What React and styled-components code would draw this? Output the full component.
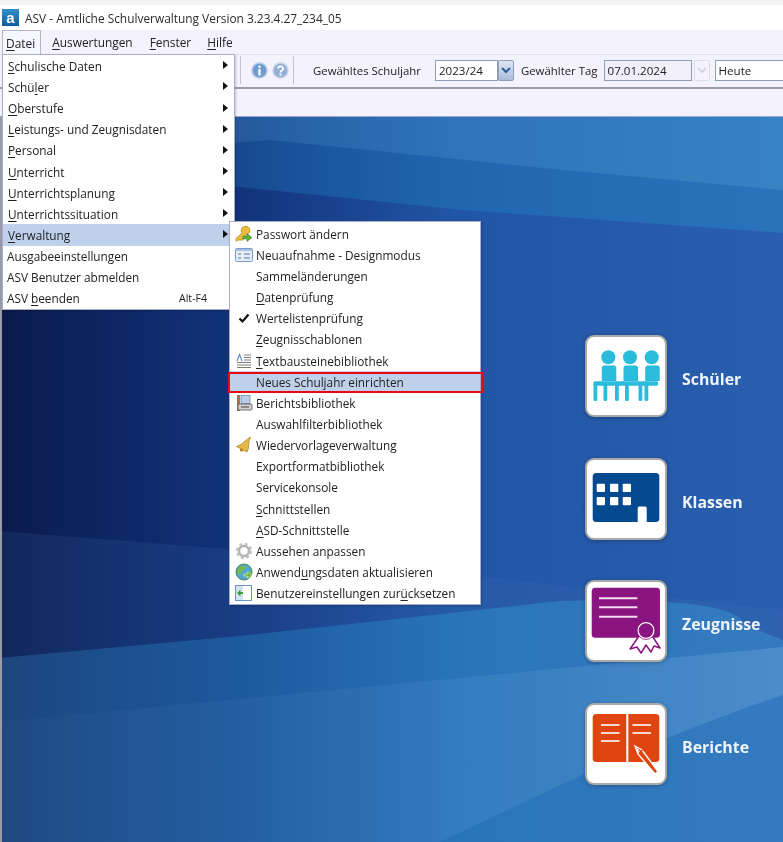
import React from 'react';
import styled, { createGlobalStyle } from 'styled-components';

const Global = createGlobalStyle`
  html, body { margin: 0; padding: 0; background: #fff; }
  body { font-family: "Open Sans", "Noto Sans", "Liberation Sans", sans-serif; }
`;

const Page = styled.div`
  position: relative; width: 783px; height: 842px; overflow: hidden;
  display: flex; flex-direction: column; color: #222; font-size: 11.8px;
  filter: blur(0.35px);
`;
const TopStrip = styled.div`height: 5px; background: #f4f4f4;`;
const TitleBar = styled.div`
  height: 25px; background: #fff; display: flex; align-items: center; padding-left: 2px; gap: 6px;
  font-size: 11.9px; color: #2c2c2c;
`;
const AppIcon = styled.span`
  width: 17px; height: 17px; background: linear-gradient(#2f8fc8, #0c5f9e); color: #fff;
  display: flex; align-items: center; justify-content: center;
  font: bold 15px/15px "Liberation Sans", sans-serif;
`;
const MenuBar = styled.div`
  height: 24px; background: #f4f3fd; display: flex; align-items: center; padding-left: 2px; font-size: 11.9px;
`;
const TopItem = styled.div`
  height: 24px; box-sizing: border-box; display: flex; align-items: center;
  padding: 0 ${p => p.$pr}px 0 ${p => p.$pl}px;
  ${p => p.$open && 'border: 1px solid #b4b4c0; border-bottom: none; background: #f7f7ff;'}
`;
const Toolbar = styled.div`
  height: 35px; box-sizing: border-box; background: #f4f3fd; border-top: 1px solid #e2e1ec; border-bottom: 2px solid #9c9ca4;
  display: flex; align-items: center; padding: 0 0 2px 240px; white-space: nowrap; font-size: 11.4px;
`;
const Sep = styled.div`width: 1px; height: 28px; background: #c4c4ce; flex: none; margin: ${p => p.$m};`;
const RoundIcon = styled.svg`width: 17px; height: 17px; margin-right: ${p => p.$mr}px; flex: none;`;
const ToolLabel = styled.span`margin: ${p => p.$m};`;
const Field = styled.div`
  box-sizing: border-box; width: ${p => p.$w}px; height: 21px; border: 1px solid #8b9dbb;
  background: ${p => p.$off ? '#f0effa' : '#fff'}; display: flex; align-items: center; padding-left: 3px;
  flex: none; font-size: 11.6px; margin-left: ${p => p.$ml || 0}px;
`;
const DropBtn = styled.div`
  box-sizing: border-box; width: ${p => p.$w}px; height: 21px; border: 1px solid ${p => p.$off ? '#dcdce4' : '#8b9dbb'}; border-radius: 2px;
  background: ${p => p.$off ? '#f4f3fd' : 'linear-gradient(#dfe6f4, #a9bbdc)'};
  display: flex; align-items: center; justify-content: center; flex: none; margin-left: ${p => p.$ml || 0}px;
`;
const SubStrip = styled.div`height: 28px; background: #f4f3fd; border-bottom: 1px solid #9aa6cc; box-sizing: border-box;`;
const Desktop = styled.div`
  position: relative; flex: 1; overflow: hidden;
  background: linear-gradient(90deg, #0a1a4c 0%, #0c2560 12%, #12337a 30%, #2155a5 58%, #2a5eae 100%);
  border-left: 2px solid #9a9aa8; box-sizing: border-box;
  display: flex; justify-content: flex-end;
`;
const Waves = styled.svg`position: absolute; left: -2px; top: -117px; width: 783px; height: 842px;`;
const Tiles = styled.div`
  position: relative; width: 198px; padding-top: 218px; display: flex; flex-direction: column; gap: 40.6px;
`;
const Tile = styled.div`display: flex; align-items: center; gap: 15px;`;
const Card = styled.div`
  width: 82px; height: 82px; box-sizing: border-box; background: #fff; border: 2px solid #a9a9a9; border-radius: 9px;
  box-shadow: 0 1px 4px rgba(0,0,0,.25); flex: none; position: relative;
`;
const CardArt = styled.svg`position: absolute; left: -2px; top: -2px; width: 82px; height: 82px;`;
const TileLabel = styled.span`color: #eef4fb; font: bold 15.9px "Open Sans", sans-serif; margin-top: 6px;`;

const Menu = styled.div`
  position: absolute; left: ${p => p.$l}px; top: ${p => p.$t}px; width: ${p => p.$w}px; box-sizing: border-box;
  background: #fff; border: 1px solid #a8aec6; box-shadow: 1px 1px 2px rgba(0,0,0,.18); padding-top: ${p => p.$pt}px;
  z-index: ${p => p.$z};
`;
const Row = styled.div`
  position: relative; height: 21.17px; display: flex; align-items: center; white-space: pre;
  padding-left: ${p => p.$pl}px; background: ${p => p.$hi ? '#bfd0ea' : 'transparent'};
`;
const Slot = styled.span`width: 18px; height: 18px; margin-right: 3px; flex: none; display: flex; align-items: center; justify-content: center;`;
const Mn = styled.span`text-decoration: underline; text-underline-offset: 2px;`;
const Arrow = styled.span`
  position: absolute; right: 6px; top: 6px; width: 0; height: 0;
  border-left: 5px solid #111; border-top: 4.5px solid transparent; border-bottom: 4.5px solid transparent;
`;
const Shortcut = styled.span`position: absolute; left: 176px; font-size: 10.6px;`;
const RedBox = styled.div`
  position: absolute; left: -2px; right: -3px; top: 1px; bottom: -1px; border: 2px solid #e80a10; pointer-events: none;
`;

const label = s => {
  const i = s.indexOf('&');
  if (i < 0) return <span>{s}</span>;
  return <span>{s.slice(0, i)}<Mn>{s[i + 1]}</Mn>{s.slice(i + 2)}</span>;
};

const KeyIcon = () => (
  <svg width="18" height="18" viewBox="0 0 18 18">
    <path d="M10 1.500a4 4 0 0 1 5 3.500 4 4 0 0 1-3 4l-2 1v2l-2 1v2H3.500L1 16v-2.500l6-5.500a4 4 0 0 1 3-6.500z" fill="#eebb3c" stroke="#b98a1e" strokeWidth=".8" />
    <path d="M8 11h4V8.500l5 4-5 4V14H8z" fill="#62ad3c" stroke="#3e8a28" strokeWidth=".6" />
  </svg>
);
const FormIcon = () => (
  <svg width="18" height="16" viewBox="0 0 18 16">
    <rect x=".5" y="1.500" width="17" height="13" rx="1" fill="#e6eef8" stroke="#7d9ccc" />
    <rect x="1" y="2" width="16" height="2" fill="#a9c0e2" />
    <path d="M3 7h3M3 11h3M9 7h6M9 11h6" stroke="#7f9fca" strokeWidth="1.400" />
  </svg>
);
const CheckIcon = () => (
  <svg width="12" height="12" viewBox="0 0 12 12"><path d="M1.500 6.500 4.500 9.500 10.500 2.500" fill="none" stroke="#111" strokeWidth="2.200" /></svg>
);
const TextLibIcon = () => (
  <svg width="16" height="16" viewBox="0 0 16 16">
    <path d="M1 8 3.500 1.500 6 8" fill="none" stroke="#6a93c8" strokeWidth="1.300" />
    <path d="M8 2h7M8 4.500h7M8 7h7M1 9.500h14M1 12h14M1 14.500h14" stroke="#7a7a7a" strokeWidth="1.200" />
  </svg>
);
const ReportIcon = () => (
  <svg width="18" height="18" viewBox="0 0 18 18">
    <rect x="2" y="1" width="3" height="16" fill="#a9714a" />
    <rect x="6" y="1.500" width="9" height="8" fill="#b9cfe8" stroke="#6f89aa" strokeWidth=".8" />
    <rect x="3" y="10" width="14" height="6" rx="1" fill="#cfcfcf" stroke="#555" strokeWidth=".8" />
    <path d="M6 13h8" stroke="#444" />
  </svg>
);
const BellIcon = () => (
  <svg width="18" height="18" viewBox="0 0 18 18">
    <path d="M15.500 1 14 5.500 13.500 12l-1.500 4L1.500 10.500 6 8.500 10 5z" fill="#e6b84a" stroke="#b58a26" strokeWidth=".8" />
    <circle cx="6.500" cy="14" r="1.600" fill="#b77a22" />
  </svg>
);
const GearIcon = () => (
  <svg width="18" height="18" viewBox="0 0 18 18">
    <circle cx="9" cy="9" r="6.500" fill="none" stroke="#c4c4c4" strokeWidth="3.500" strokeDasharray="2.600 2.500" />
    <circle cx="9" cy="9" r="5" fill="none" stroke="#b6b6b6" strokeWidth="2.600" />
  </svg>
);
const GlobeIcon = () => (
  <svg width="18" height="18" viewBox="0 0 18 18">
    <circle cx="9" cy="9" r="8" fill="#56a7cf" stroke="#3f8a5a" />
    <path d="M2 7c3-4 6-5 8-4s0 3-2 4-1 3-3 4-3-1-3-4zM11 10l5-2 .500 3-3 5-3-2z" fill="#74b94a" />
    <path d="M9 11h3.500V9l4 3-4 3v-2H9z" fill="#68b23e" stroke="#fff" strokeWidth=".5" />
  </svg>
);
const ResetIcon = () => (
  <svg width="18" height="16" viewBox="0 0 18 16">
    <rect x=".5" y=".5" width="16" height="15" fill="#fff" stroke="#6f93c4" />
    <rect x="1" y="1" width="7" height="14" fill="#d5e3f3" />
    <path d="M2 8l3.500-3.500V7H8v2H5.500v2.500z" fill="#3f9e3c" />
  </svg>
);
const Chevron = ({ c }) => (
  <svg width="10" height="7" viewBox="0 0 10 7"><path d="M1 1l4 4 4-4" fill="none" stroke={c} strokeWidth="2" /></svg>
);

const mainItems = ['&Schulische Daten', 'Schü&ler', '&Oberstufe', '&Leistungs- und Zeugnisdaten', '&Personal', '&Unterricht', '&Unterrichtsplanung', '&Unterrichtssituation', '&Verwaltung'];
const plainItems = ['Ausgabeeinstellungen', 'ASV Benutzer abmelden'];

const subItems = [
  ['Passwort ändern', <KeyIcon />],
  ['Neuaufnahme - Designmodus', <FormIcon />],
  ['Sammeländerungen'],
  ['&Datenprüfung'],
  ['Wertelistenprüfung', <CheckIcon />],
  ['&Zeugnisschablonen'],
  ['&Textbausteinebibliothek', <TextLibIcon />],
  ['Neues Schuljahr einrichten'],
  ['Berichtsbibliothek', <ReportIcon />],
  ['Auswahlfilterbibliothek'],
  ['Wiedervorlageverwaltung', <BellIcon />],
  ['Exportformatbibliothek'],
  ['Servicekonsole'],
  ['&Schnittstellen'],
  ['&ASD-Schnittstelle'],
  ['Aussehen anpassen', <GearIcon />],
  ['Anwend&ungsdaten aktualisieren', <GlobeIcon />],
  ['Benutzereinstellungen zur&ücksetzen', <ResetIcon />],
];

const SchuelerArt = () => (
  <CardArt viewBox="0 0 82 82">
    <g fill="#29bcdc">
      {[0, 21.7, 43.400].map(d => (
        <g key={d}>
          <circle cx={23.300 + d} cy="22.300" r="7" />
          <path d={`M${16.800 + d} 46V33a2.500 2.500 0 0 1 2.500-2.500h9.500a2.500 2.500 0 0 1 2.500 2.500v13z`} />
        </g>
      ))}
      <rect x="8.300" y="46.300" width="65" height="4.400" rx="2" />
      {[8.500, 18.500, 30, 40, 53.500, 59.500].map(x => (
        <rect key={x} x={x} y="48" width="3.800" height="18" rx="1.600" />
      ))}
    </g>
  </CardArt>
);
const KlassenArt = () => (
  <CardArt viewBox="0 0 82 82">
    <rect x="7.700" y="15" width="66.600" height="49" rx="3.500" fill="#054a91" />
    <g fill="#fff">
      {[11.700, 25, 37.700].map(x => [25.700, 39].map(y => <rect key={`${x}${y}`} x={x} y={y} width="8.300" height="8.300" rx="1" />))}
      <path d="M52.700 64V50a1.500 1.500 0 0 1 1.500-1.500h6a1.500 1.500 0 0 1 1.500 1.500v14z" />
    </g>
  </CardArt>
);
const ZeugnisArt = () => (
  <CardArt viewBox="0 0 82 82">
    <rect x="6.700" y="7.700" width="68.300" height="50" rx="3.500" fill="#8b1580" />
    <path d="M14 18.300h38.300M14 27.300h38.300M14 36.700h38.300" stroke="#f3dcef" strokeWidth="2" />
    <path d="M54 56 45 69l7-2 4 6 5-8 5 7 3-6 6 2-9-14z" fill="#fff" stroke="#8b1580" strokeWidth="1.500" strokeLinejoin="round" />
    <circle cx="61" cy="50.500" r="8" fill="#8b1580" stroke="#fff" strokeWidth="1.500" />
    <circle cx="61" cy="50.500" r="9" fill="none" stroke="#8b1580" strokeWidth=".8" />
  </CardArt>
);
const BerichteArt = () => (
  <CardArt viewBox="0 0 82 82">
    <rect x="7.700" y="11" width="66.600" height="48" rx="3.500" fill="#e04510" />
    <rect x="41.300" y="9" width="2" height="52" fill="#fff" />
    <path d="M16 22h18.500M16 30h18.500M16 38h18.500M47.500 22H66M47.500 30H66" stroke="#f8d9cc" strokeWidth="2" />
    <path d="M50 43l7 4 16 21.500-3 2.500L53 51z" fill="#e04510" stroke="#fff" strokeWidth="1.400" />
    <path d="M51 45l4 2.500 1 0-3.500 3z" fill="#fff" />
    <path d="M53.500 48l5-1" stroke="#e04510" strokeWidth="1" />
  </CardArt>
);

const tiles = [
  ['Schüler', <SchuelerArt />],
  ['Klassen', <KlassenArt />],
  ['Zeugnisse', <ZeugnisArt />],
  ['Berichte', <BerichteArt />],
];

export default function App() {
  return (
    <Page>
      <Global />
      <TopStrip />
      <TitleBar>
        <AppIcon>a</AppIcon>
        <span>ASV - Amtliche Schulverwaltung Version 3.23.4.27_234_05</span>
      </TitleBar>
      <MenuBar>
        <TopItem $open $pl={3} $pr={5}>{label('&Datei')}</TopItem>
        <TopItem $pl={11} $pr={8}>{label('&Auswertungen')}</TopItem>
        <TopItem $pl={9} $pr={8}>{label('&Fenster')}</TopItem>
        <TopItem $pl={8} $pr={8}>{label('&Hilfe')}</TopItem>
      </MenuBar>
      <Toolbar>
        <Sep $m="0 10px 0 0" />
        <RoundIcon $mr={4} viewBox="0 0 17 17">
          <circle cx="8.500" cy="8.500" r="7.500" fill="#6f9bd0" stroke="#b7c9e4" strokeWidth="1.500" />
          <rect x="7.300" y="3.500" width="2.400" height="2.400" rx="1" fill="#fff" />
          <rect x="7.300" y="7" width="2.400" height="6.500" fill="#fff" />
        </RoundIcon>
        <RoundIcon $mr={4} viewBox="0 0 17 17">
          <circle cx="8.500" cy="8.500" r="7.500" fill="#92aed6" stroke="#c6d3e8" strokeWidth="1.500" />
          <path d="M6 6.500a2.500 2.300 0 1 1 3.500 2.200c-.7.400-1 .7-1 1.800" fill="none" stroke="#fff" strokeWidth="1.700" />
          <rect x="7.500" y="11.500" width="2" height="2" fill="#fff" />
        </RoundIcon>
        <Sep $m="0 19px 0 0" />
        <ToolLabel $m="0 14px 0 0">Gewähltes Schuljahr</ToolLabel>
        <Field $w={63}>2023/24</Field>
        <DropBtn $w={16}><Chevron c="#2f5d9f" /></DropBtn>
        <ToolLabel $m="0 6px 0 7px">Gewählter Tag</ToolLabel>
        <Field $w={88} $off>07.01.2024</Field>
        <DropBtn $w={16} $off $ml={2}><Chevron c="#d5d5dc" /></DropBtn>
        <Field $w={80} $ml={5}><span>Heute</span></Field>
      </Toolbar>
      <SubStrip />
      <Desktop>
        <Waves viewBox="0 0 783 842">
          <defs>
            <linearGradient id="w1" x1="0" x2="1" y1="0" y2="0">
              <stop offset="0" stopColor="#6a8fc0" stopOpacity=".1" />
              <stop offset=".35" stopColor="#5a9bd0" stopOpacity=".22" />
              <stop offset="1" stopColor="#5fb0e0" stopOpacity=".25" />
            </linearGradient>
            <linearGradient id="w2" x1="0" x2="1" y1="0" y2="0">
              <stop offset="0" stopColor="#1d6cb0" stopOpacity=".15" />
              <stop offset=".5" stopColor="#1d76b8" stopOpacity=".48" />
              <stop offset="1" stopColor="#2a84c4" stopOpacity=".55" />
            </linearGradient>
            <linearGradient id="w3" x1="0" x2="1" y1="0" y2="0">
              <stop offset="0" stopColor="#235a94" stopOpacity=".6" />
              <stop offset=".3" stopColor="#1f68aa" stopOpacity=".65" />
              <stop offset=".6" stopColor="#2b80c0" stopOpacity=".7" />
              <stop offset="1" stopColor="#3a8aca" stopOpacity=".6" />
            </linearGradient>
            <linearGradient id="w4" x1="0" x2="1" y1="0" y2="0">
              <stop offset="0" stopColor="#5a8cc0" stopOpacity=".04" />
              <stop offset=".5" stopColor="#6aa6d8" stopOpacity=".12" />
              <stop offset="1" stopColor="#7ab4e0" stopOpacity=".32" />
            </linearGradient>
          </defs>
          <path d="M0 117H783V233L463 210 230 186 0 170z" fill="url(#w2)" />
          <path d="M0 117H783V190L563 170 270 140 235 143 0 170z" fill="url(#w1)" />
          <path d="M0 531 240 550 783 610V842H0z" fill="#4a80c8" fillOpacity=".13" />
          <path d="M0 658 240 636 560 601Q735 596 745 625L783 640V842H0z" fill="url(#w3)" />
          <path d="M0 722 783 647V695Q690 725 560 785L440 842H0z" fill="url(#w4)" />
        </Waves>
        <Tiles>
          {tiles.map(([t, art]) => (
            <Tile key={t}>
              <Card>{art}</Card>
              <TileLabel>{t}</TileLabel>
            </Tile>
          ))}
        </Tiles>
      </Desktop>

      <Menu $l={2} $t={54} $w={233} $z={2} $pt={0.2}>
        {mainItems.map((m, i) => (
          <Row key={m} $pl={5} $hi={i === 8}>
            {label(m)}
            <Arrow />
          </Row>
        ))}
        {plainItems.map(m => <Row key={m} $pl={4}>{m}</Row>)}
        <Row $pl={4}>
          {label('ASV &beenden')}
          <Shortcut>Alt-F4</Shortcut>
        </Row>
      </Menu>
      <Menu $l={229} $t={221} $w={252} $z={3} $pt={1}>
        {subItems.map(([m, icon], i) => (
          <Row key={m} $pl={5} $hi={i === 7}>
            <Slot>{icon}</Slot>
            {label(m)}
            {i === 7 && <RedBox />}
          </Row>
        ))}
      </Menu>
    </Page>
  );
}
